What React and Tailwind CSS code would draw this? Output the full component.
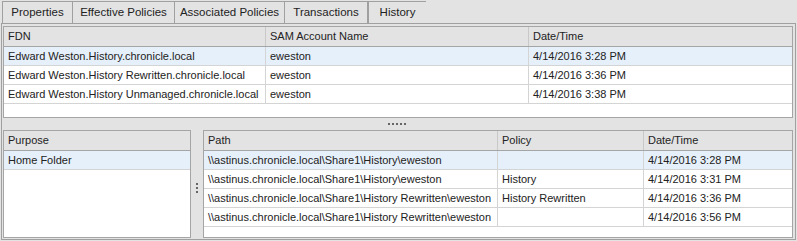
import React from "react";

const font = { fontFamily: '"Liberation Sans", Arial, sans-serif' };

function Tab({ label, w, active }) {
  if (active) {
    return (
      <div
        className="relative z-10 -mb-px flex h-[24px] items-start justify-center border border-b-0 border-[#a0a0a0] bg-[#e3e3e3] pt-[4px] text-[11.5px] text-[#222]"
        style={{ width: w }}
      >
        {label}
      </div>
    );
  }
  return (
    <div
      className="flex h-[22px] items-center justify-center border border-b-0 border-r-0 border-[#a0a0a0] bg-[#e3e3e3] pt-[1px] text-[11.5px] text-[#222]"
      style={{ width: w }}
    >
      {label}
    </div>
  );
}

function Grid({ cols, header, rows, selected = 0, className = "" }) {
  const tpl = cols.map((c) => `${c}px`).join(" ");
  return (
    <div className={`flex flex-col border border-[#a5a5a5] bg-white ${className}`}>
      <div className="grid h-[20px] bg-[#e3e3e3] border-b border-[#a5a5a5]" style={{ gridTemplateColumns: tpl }}>
        {header.map((h, i) => (
          <div
            key={i}
            className={`flex items-center pl-[4px] text-[11px] text-[#222] ${i < header.length - 1 ? "border-r border-[#c8c8c8]" : ""}`}
          >
            {h}
          </div>
        ))}
      </div>
      {rows.map((r, ri) => (
        <div
          key={ri}
          className={`grid h-[19px] border-b border-[#d4d4d4] ${ri === selected ? "bg-[#e6f0fa]" : "bg-white"}`}
          style={{ gridTemplateColumns: tpl }}
        >
          {r.map((c, i) => (
            <div
              key={i}
              className={`flex items-center whitespace-nowrap overflow-hidden pl-[4px] text-[11px] text-[#222] ${i < r.length - 1 ? "border-r border-[#d4d4d4]" : ""}`}
            >
              {c}
            </div>
          ))}
        </div>
      ))}
    </div>
  );
}

export default function App() {
  return (
    <div className="flex h-[241px] w-[797px] flex-col bg-[#e3e3e3]" style={font}>
      <div className="flex h-[23px] items-end pl-[2px]">
        <Tab label="Properties" w={70} />
        <Tab label="Effective Policies" w={102} />
        <Tab label="Associated Policies" w={110} />
        <div className="border-r border-[#a0a0a0]">
          <Tab label="Transactions" w={83} />
        </div>
        <Tab label="History" w={58} />
      </div>
      <div className="ml-[1px] mr-[1px] flex h-[217px] flex-col border border-[#a0a0a0] pl-[1px] pr-[2px] pt-[2px]">
        <Grid
          className="h-[92px]"
          cols={[262, 263, 262]}
          header={["FDN", "SAM Account Name", "Date/Time"]}
          rows={[
            ["Edward Weston.History.chronicle.local", "eweston", "4/14/2016 3:28 PM"],
            ["Edward Weston.History Rewritten.chronicle.local", "eweston", "4/14/2016 3:36 PM"],
            ["Edward Weston.History Unmanaged.chronicle.local", "eweston", "4/14/2016 3:38 PM"],
          ]}
        />
        <div className="flex h-[12px] items-center justify-center gap-[2px] pr-[2px]">
          {[0, 1, 2, 3, 4].map((i) => (
            <div key={i} className="h-[2px] w-[2px] bg-[#666]" />
          ))}
        </div>
        <div className="flex h-[108px]">
          <Grid
            className="w-[188px]"
            cols={[186]}
            header={["Purpose"]}
            rows={[["Home Folder"]]}
          />
          <div className="flex w-[12px] flex-col items-center justify-center gap-[2px] pt-[8px]">
            {[0, 1, 2].map((i) => (
              <div key={i} className="h-[2px] w-[2px] bg-[#666]" />
            ))}
          </div>
          <Grid
            className="w-[590px]"
            cols={[294, 146, 148]}
            header={["Path", "Policy", "Date/Time"]}
            rows={[
              ["\\\\astinus.chronicle.local\\Share1\\History\\eweston", "", "4/14/2016 3:28 PM"],
              ["\\\\astinus.chronicle.local\\Share1\\History\\eweston", "History", "4/14/2016 3:31 PM"],
              ["\\\\astinus.chronicle.local\\Share1\\History Rewritten\\eweston", "History Rewritten", "4/14/2016 3:36 PM"],
              ["\\\\astinus.chronicle.local\\Share1\\History Rewritten\\eweston", "", "4/14/2016 3:56 PM"],
            ]}
          />
        </div>
      </div>
    </div>
  );
}
